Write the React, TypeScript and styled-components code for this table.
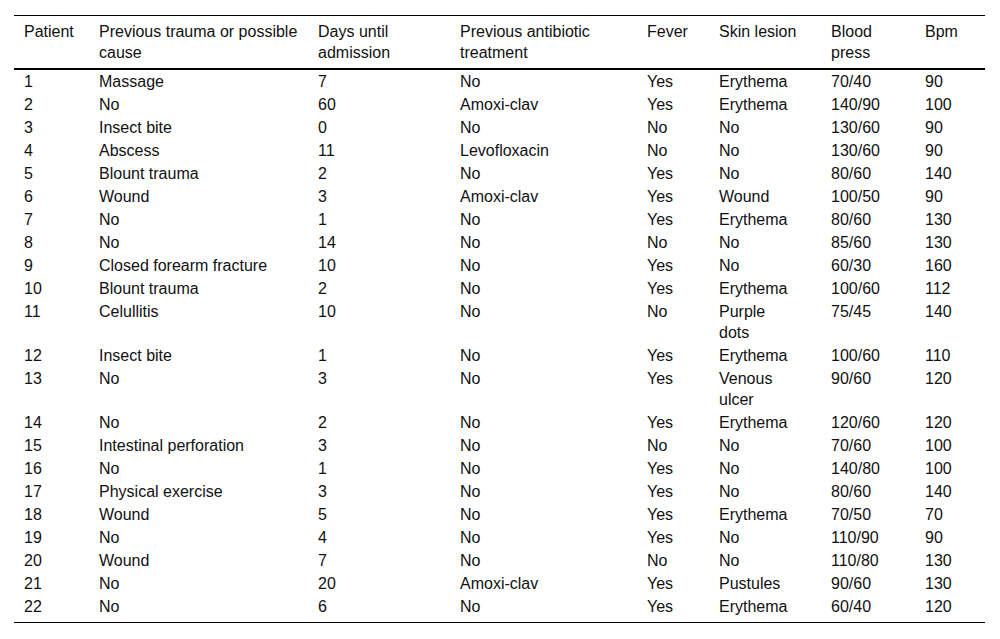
import styled, { createGlobalStyle } from "styled-components";

const GlobalStyle = createGlobalStyle`
    body {
        margin: 0;
        background: #fff;
    }
`;

const Wrapper = styled.div`
    padding: 15px 15px 16px 14px;
`;

const Table = styled.table`
    width: 971px;
    border-collapse: collapse;
    table-layout: fixed;
    border-top: 1px solid #000;
    border-bottom: 1px solid #000;
    font-family: "Liberation Sans", Arial, sans-serif;
    font-size: 16px;
    line-height: 21px;
    color: #111;
`;

const Head = styled.th<{ $w: number; $pr: number }>`
    box-sizing: border-box;
    width: ${(p) => p.$w}px;
    padding: 5px ${(p) => p.$pr}px 5px 10px;
    text-align: left;
    vertical-align: top;
    font-weight: normal;
    border-bottom: 2px solid #000;
`;

const Row = styled.tr`
    &:last-child td {
        padding-bottom: 5px;
    }
`;

const Cell = styled.td<{ $pr: number }>`
    padding: 1px ${(p) => p.$pr}px 1px 10px;
    text-align: left;
    vertical-align: top;
`;

const columns = [
    { label: "Patient", w: 75, pr: 8 },
    { label: "Previous trauma or possible cause", w: 219, pr: 8 },
    { label: "Days until admission", w: 142, pr: 8 },
    { label: "Previous antibiotic treatment", w: 187, pr: 8 },
    { label: "Fever", w: 72, pr: 8 },
    { label: "Skin lesion", w: 112, pr: 23 },
    { label: "Blood press", w: 94, pr: 8 },
    { label: "Bpm", w: 70, pr: 8 },
];

const rows = [
    ["1", "Massage", "7", "No", "Yes", "Erythema", "70/40", "90"],
    ["2", "No", "60", "Amoxi-clav", "Yes", "Erythema", "140/90", "100"],
    ["3", "Insect bite", "0", "No", "No", "No", "130/60", "90"],
    ["4", "Abscess", "11", "Levofloxacin", "No", "No", "130/60", "90"],
    ["5", "Blount trauma", "2", "No", "Yes", "No", "80/60", "140"],
    ["6", "Wound", "3", "Amoxi-clav", "Yes", "Wound", "100/50", "90"],
    ["7", "No", "1", "No", "Yes", "Erythema", "80/60", "130"],
    ["8", "No", "14", "No", "No", "No", "85/60", "130"],
    ["9", "Closed forearm fracture", "10", "No", "Yes", "No", "60/30", "160"],
    ["10", "Blount trauma", "2", "No", "Yes", "Erythema", "100/60", "112"],
    ["11", "Celullitis", "10", "No", "No", "Purple dots", "75/45", "140"],
    ["12", "Insect bite", "1", "No", "Yes", "Erythema", "100/60", "110"],
    ["13", "No", "3", "No", "Yes", "Venous ulcer", "90/60", "120"],
    ["14", "No", "2", "No", "Yes", "Erythema", "120/60", "120"],
    ["15", "Intestinal perforation", "3", "No", "No", "No", "70/60", "100"],
    ["16", "No", "1", "No", "Yes", "No", "140/80", "100"],
    ["17", "Physical exercise", "3", "No", "Yes", "No", "80/60", "140"],
    ["18", "Wound", "5", "No", "Yes", "Erythema", "70/50", "70"],
    ["19", "No", "4", "No", "Yes", "No", "110/90", "90"],
    ["20", "Wound", "7", "No", "No", "No", "110/80", "130"],
    ["21", "No", "20", "Amoxi-clav", "Yes", "Pustules", "90/60", "130"],
    ["22", "No", "6", "No", "Yes", "Erythema", "60/40", "120"],
];

export default function App() {
    return (
        <>
            <GlobalStyle />
            <Wrapper>
                <Table>
                    <thead>
                        <tr>
                            {columns.map((c) => (
                                <Head key={c.label} $w={c.w} $pr={c.pr}>
                                    {c.label}
                                </Head>
                            ))}
                        </tr>
                    </thead>
                    <tbody>
                        {rows.map((r) => (
                            <Row key={r[0]}>
                                {r.map((v, i) => (
                                    <Cell key={i} $pr={columns[i].pr}>
                                        {v}
                                    </Cell>
                                ))}
                            </Row>
                        ))}
                    </tbody>
                </Table>
            </Wrapper>
        </>
    );
}
